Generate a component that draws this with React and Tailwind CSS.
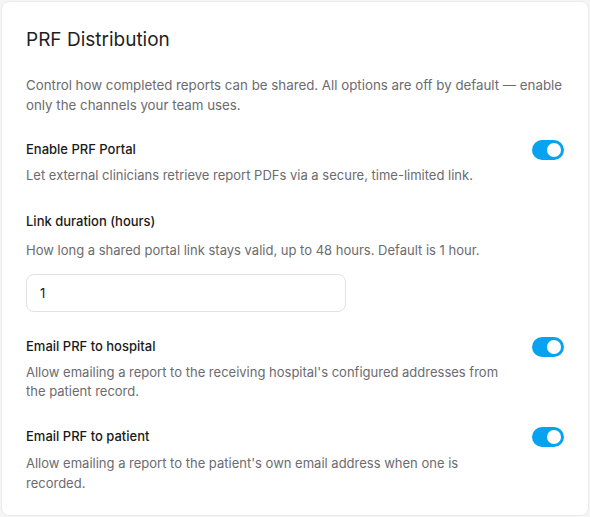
export default function App() {
  const rows = [
    {
      label: 'Email PRF to hospital',
      desc: "Allow emailing a report to the receiving hospital's configured addresses from the patient record.",
      gap: 'mt-[6px]',
    },
    {
      label: 'Email PRF to patient',
      desc: "Allow emailing a report to the patient's own email address when one is recorded.",
      gap: 'mt-[8px]',
    },
  ]

  function Toggle() {
    return (
      <div className="w-8 h-5 shrink-0 rounded-full bg-[#08a3f0] flex items-center justify-end px-[3px]">
        <div className="w-[14px] h-[14px] rounded-full bg-white" />
      </div>
    )
  }

  return (
    <div className="w-[590px] h-[517px] bg-[#f5f5f5] p-px" style={{ fontFamily: 'Inter, "Noto Sans", sans-serif' }}>
      <div className="h-[515px] bg-white border border-[#ebebeb] rounded-lg px-6 pt-6">
        <h2 className="text-[19px] leading-7 text-[#1f1f1f] font-normal">PRF Distribution</h2>
        <p className="mt-[22px] text-[13.3px] leading-[19.5px] text-[#6b6b70]">
          Control how completed reports can be shared. All options are off by default — enable only the channels your team uses.
        </p>

        <div className="mt-[25px] flex items-start gap-4">
          <div className="flex-1">
            <div className="text-[13px] leading-[19.5px] font-medium text-[#1a1a1a]">Enable PRF Portal</div>
            <p className="mt-[6px] text-[13px] leading-[19.5px] text-[#6b6b70]">
              Let external clinicians retrieve report PDFs via a secure, time-limited link.
            </p>
          </div>
          <Toggle />
        </div>

        <div className="mt-[27px]">
          <div className="text-[13px] leading-[19.5px] font-medium text-[#1a1a1a]">Link duration (hours)</div>
          <p className="mt-[9px] text-[13px] leading-[19.5px] text-[#6b6b70]">
            How long a shared portal link stays valid, up to 48 hours. Default is 1 hour.
          </p>
          <input
            defaultValue="1"
            className="mt-[14px] w-[320px] h-[38px] rounded-lg border border-[#e2e2e2] px-[13px] text-[13px] text-[#1a1a1a] outline-none"
          />
        </div>

        {rows.map((r, i) => (
          <div key={i} className="mt-[25px] flex items-start gap-4">
            <div className="flex-1">
              <div className="text-[13px] leading-[19.5px] font-medium text-[#1a1a1a]">{r.label}</div>
              <p className={`${r.gap} text-[13px] leading-[19.5px] text-[#6b6b70]`}>{r.desc}</p>
            </div>
            <Toggle />
          </div>
        ))}
      </div>
    </div>
  )
}
